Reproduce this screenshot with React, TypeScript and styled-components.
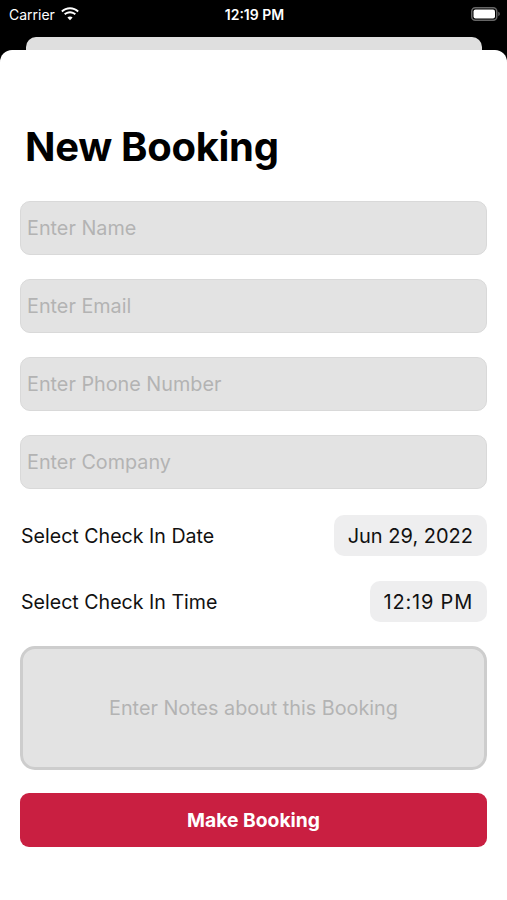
import React, { useState } from "react";
import styled, { createGlobalStyle } from "styled-components";

const GlobalStyle = createGlobalStyle`
  html, body {
    margin: 0;
    padding: 0;
    background: #000;
  }
  body {
    font-family: Inter, "Noto Sans", "Liberation Sans", sans-serif;
    -webkit-font-smoothing: antialiased;
  }
  * {
    box-sizing: border-box;
  }
`;

const Screen = styled.div`
  width: 507px;
  height: 900px;
  background: #000;
  display: flex;
  flex-direction: column;
  overflow: hidden;
`;

const StatusBar = styled.div`
  height: 28px;
  padding: 0 7px 0 9px;
  display: grid;
  grid-template-columns: 1fr auto 1fr;
  align-items: center;
  color: #fff;
  font-size: 14px;
`;

const Carrier = styled.div`
  display: flex;
  align-items: center;
  gap: 6px;
`;

const Clock = styled.div`
  font-weight: 600;
`;

const Battery = styled.div`
  justify-self: end;
  display: flex;
  align-items: center;
`;

const BackCard = styled.div`
  margin: 9px 25px 0 26px;
  height: 20px;
  border-radius: 10px 10px 0 0;
  background: #dfdfdf;
`;

const Sheet = styled.div`
  margin-top: -7px;
  flex: 1;
  background: #fff;
  border-radius: 12px 12px 0 0;
  padding: 73px 20px 0 20px;
  display: flex;
  flex-direction: column;
`;

const Title = styled.h1`
  margin: 0 0 30px 5px;
  font-size: 40px;
  line-height: 48px;
  font-weight: 700;
  color: #000;
  letter-spacing: -0.3px;
`;

const Field = styled.input`
  height: 54px;
  width: 100%;
  border: 1px solid #d9d9d9;
  border-radius: 10px;
  background: #e3e3e3;
  padding: 0 6px;
  font-family: inherit;
  font-size: 19.8px;
  color: #333;
  margin-bottom: 24px;
  outline: none;
  &::placeholder {
    color: #b3b3b3;
  }
`;

const PickerRow = styled.div`
  display: flex;
  align-items: center;
  justify-content: space-between;
  margin-bottom: 24px;
  &:first-of-type {
    margin-top: 2px;
    margin-bottom: 25px;
  }
`;

const PickerLabel = styled.span`
  font-size: 19.6px;
  color: #111;
  padding-left: 1px;
`;

const Pill = styled.div<{ $spread?: number }>`
  height: 41px;
  padding: 0 14px;
  border-radius: 10px;
  background: #eeeeef;
  display: flex;
  align-items: center;
  font-size: 20px;
  color: #111;
  letter-spacing: ${(p) => p.$spread ?? 0}px;
`;

const Notes = styled.textarea`
  height: 124px;
  width: 100%;
  border: 3px solid #cdcdcd;
  border-radius: 15px;
  background: #e3e3e3;
  font-family: inherit;
  font-size: 19.8px;
  text-align: center;
  padding: 47px 10px 0;
  resize: none;
  outline: none;
  margin: 0 0 23px;
  &::placeholder {
    color: #b3b3b3;
  }
`;

const SubmitButton = styled.button`
  height: 54px;
  width: 100%;
  border: none;
  border-radius: 9px;
  background: #c91f41;
  color: #fff;
  font-family: inherit;
  font-size: 19.3px;
  font-weight: 700;
  cursor: pointer;
`;

const WifiIcon = () => (
  <svg width="18" height="14" viewBox="0 0 18 14">
    <path
      d="M9 2.2c2.9 0 5.5 1.1 7.5 3l1.3-1.4C15.4 1.5 12.3.2 9 .2S2.6 1.5.2 3.8l1.3 1.4c2-1.9 4.6-3 7.5-3z"
      fill="#fff"
    />
    <path
      d="M9 6.2c1.8 0 3.4.7 4.6 1.8l1.4-1.4C13.4 5.1 11.3 4.2 9 4.2S4.6 5.1 3 6.6L4.4 8C5.6 6.9 7.2 6.2 9 6.2z"
      fill="#fff"
    />
    <path d="M9 9.4c-1 0-1.9.4-2.6 1L9 13.2l2.6-2.8c-.7-.6-1.6-1-2.6-1z" fill="#fff" />
  </svg>
);

const BatteryIcon = () => (
  <svg width="29" height="14" viewBox="0 0 29 14">
    <rect x="0.75" y="0.75" width="25" height="12.5" rx="3.5" fill="none" stroke="#666" strokeWidth="1.5" />
    <rect x="2.5" y="2.5" width="21.5" height="9" rx="2" fill="#fff" />
    <path d="M27.3 4.8v4.4c.9-.3 1.5-1.2 1.5-2.2s-.6-1.9-1.5-2.2z" fill="#666" />
  </svg>
);

export default function App() {
  const [notes, setNotes] = useState("");

  return (
    <Screen>
      <GlobalStyle />
      <StatusBar>
        <Carrier>
          <span>Carrier</span>
          <WifiIcon />
        </Carrier>
        <Clock>12:19 PM</Clock>
        <Battery>
          <BatteryIcon />
        </Battery>
      </StatusBar>
      <BackCard />
      <Sheet>
        <Title>New Booking</Title>
        <Field placeholder="Enter Name" />
        <Field placeholder="Enter Email" />
        <Field placeholder="Enter Phone Number" />
        <Field placeholder="Enter Company" />
        <PickerRow>
          <PickerLabel>Select Check In Date</PickerLabel>
          <Pill>Jun 29, 2022</Pill>
        </PickerRow>
        <PickerRow>
          <PickerLabel>Select Check In Time</PickerLabel>
          <Pill $spread={0.8}>12:19 PM</Pill>
        </PickerRow>
        <Notes
          placeholder="Enter Notes about this Booking"
          value={notes}
          onChange={(e) => setNotes(e.target.value)}
        />
        <SubmitButton>Make Booking</SubmitButton>
      </Sheet>
    </Screen>
  );
}
